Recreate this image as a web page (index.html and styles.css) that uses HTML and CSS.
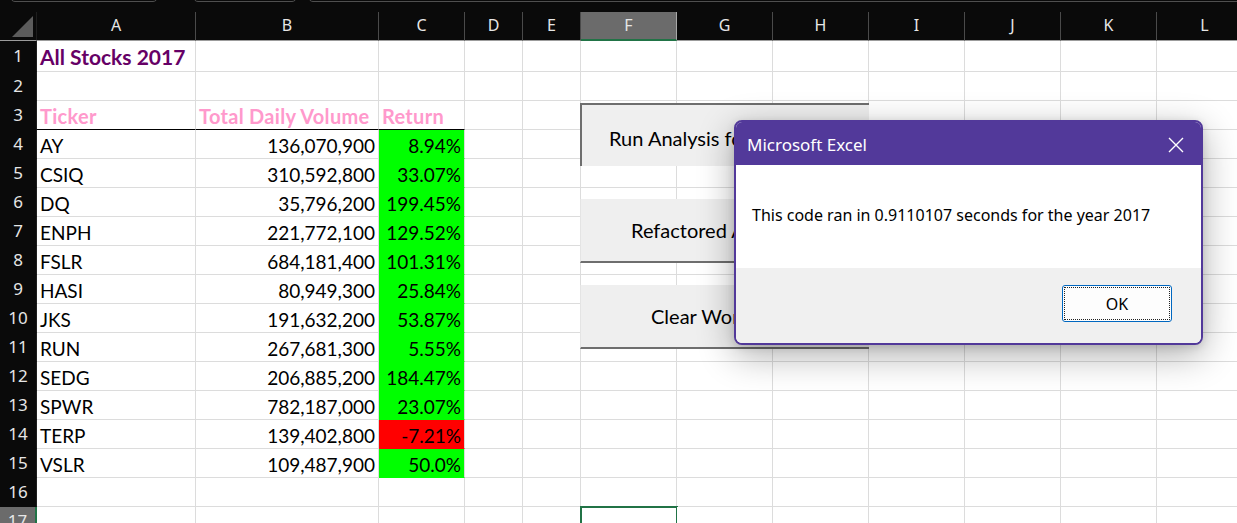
FILE: index.html
```html
<!DOCTYPE html>
<html lang="en">
<head>
<meta charset="utf-8">
<title>All Stocks 2017</title>
<link rel="stylesheet" href="styles.css">
</head>
<body>
<div class="topbar">
  <div class="pill p1"></div>
  <div class="pill p2"></div>
  <div class="pill p3"></div>
</div>
<div class="sheet">
  <div class="row hdr">
    <div class="corner"><span class="tri"></span></div>
    <div>A</div><div>B</div><div>C</div><div>D</div><div>E</div><div class="selcol">F</div><div>G</div><div>H</div><div>I</div><div>J</div><div>K</div><div>L</div>
  </div>
  <div class="row r1"><div class="rh">1</div><div class="title">All Stocks 2017</div><i></i><i></i><i></i><i></i><i></i><i></i><i></i><i></i><i></i><i></i><i></i></div>
  <div class="row"><div class="rh">2</div><i></i><i></i><i></i><i></i><i></i><i></i><i></i><i></i><i></i><i></i><i></i><i></i></div>
  <div class="row"><div class="rh">3</div><div class="th">Ticker</div><div class="th">Total Daily Volume</div><div class="th">Return</div><i></i><i></i><i></i><i></i><i></i><i></i><i></i><i></i><i></i></div>
  <div class="row"><div class="rh">4</div><div>AY</div><div class="num">136,070,900</div><div class="num up">8.94%</div><i></i><i></i><i></i><i></i><i></i><i></i><i></i><i></i><i></i></div>
  <div class="row"><div class="rh">5</div><div>CSIQ</div><div class="num">310,592,800</div><div class="num up">33.07%</div><i></i><i></i><i></i><i></i><i></i><i></i><i></i><i></i><i></i></div>
  <div class="row"><div class="rh">6</div><div>DQ</div><div class="num">35,796,200</div><div class="num up">199.45%</div><i></i><i></i><i></i><i></i><i></i><i></i><i></i><i></i><i></i></div>
  <div class="row"><div class="rh">7</div><div>ENPH</div><div class="num">221,772,100</div><div class="num up">129.52%</div><i></i><i></i><i></i><i></i><i></i><i></i><i></i><i></i><i></i></div>
  <div class="row"><div class="rh">8</div><div>FSLR</div><div class="num">684,181,400</div><div class="num up">101.31%</div><i></i><i></i><i></i><i></i><i></i><i></i><i></i><i></i><i></i></div>
  <div class="row"><div class="rh">9</div><div>HASI</div><div class="num">80,949,300</div><div class="num up">25.84%</div><i></i><i></i><i></i><i></i><i></i><i></i><i></i><i></i><i></i></div>
  <div class="row"><div class="rh">10</div><div>JKS</div><div class="num">191,632,200</div><div class="num up">53.87%</div><i></i><i></i><i></i><i></i><i></i><i></i><i></i><i></i><i></i></div>
  <div class="row"><div class="rh">11</div><div>RUN</div><div class="num">267,681,300</div><div class="num up">5.55%</div><i></i><i></i><i></i><i></i><i></i><i></i><i></i><i></i><i></i></div>
  <div class="row"><div class="rh">12</div><div>SEDG</div><div class="num">206,885,200</div><div class="num up">184.47%</div><i></i><i></i><i></i><i></i><i></i><i></i><i></i><i></i><i></i></div>
  <div class="row"><div class="rh">13</div><div>SPWR</div><div class="num">782,187,000</div><div class="num up">23.07%</div><i></i><i></i><i></i><i></i><i></i><i></i><i></i><i></i><i></i></div>
  <div class="row"><div class="rh">14</div><div>TERP</div><div class="num">139,402,800</div><div class="num down">-7.21%</div><i></i><i></i><i></i><i></i><i></i><i></i><i></i><i></i><i></i></div>
  <div class="row"><div class="rh">15</div><div>VSLR</div><div class="num">109,487,900</div><div class="num up">50.0%</div><i></i><i></i><i></i><i></i><i></i><i></i><i></i><i></i><i></i></div>
  <div class="row"><div class="rh">16</div><i></i><i></i><i></i><i></i><i></i><i></i><i></i><i></i><i></i><i></i><i></i><i></i></div>
  <div class="row"><div class="rh selrow">17</div><i></i><i></i><i></i><i></i><i></i><i class="selcell"></i><i></i><i></i><i></i><i></i><i></i><i></i></div>
</div>

<div class="btn btn-run"><span>Run Analysis for All Stocks</span></div>
<div class="btn btn-refactor"><span>Refactored Analysis</span></div>
<div class="btn btn-clear"><span>Clear Worksheet</span></div>

<div class="dialog">
  <div class="dlg-title">
    <span>Microsoft Excel</span>
    <svg class="close" width="16" height="16" viewBox="0 0 16 16"><path d="M1 1 L15 15 M15 1 L1 15" stroke="#fff" stroke-width="1.4" fill="none"/></svg>
  </div>
  <div class="dlg-body">This code ran in 0.9110107 seconds for the year 2017</div>
  <div class="dlg-foot"><div class="ok"><span>OK</span></div></div>
</div>
</body>
</html>
```

FILE: styles.css
```css
* { box-sizing: border-box; margin: 0; padding: 0; }
html, body { width: 1237px; height: 523px; overflow: hidden; background: #0a0a0a; }
body { position: relative; font-family: Lato, "Liberation Sans", sans-serif; }

.topbar { height: 12px; display: flex; gap: 35px; padding-left: 10px; overflow: hidden; }
.pill { height: 10px; margin-top: -8px; border: 1px solid #4f4f4f; border-radius: 5px; }
.p1 { width: 148px; }
.p2 { width: 104px; margin-right: -24px; }
.p3 { flex: 1; margin-right: -20px; }

.row { display: grid; grid-template-columns: 37px 159px 183px 86px 58px 58px repeat(7, 96px); height: 29px; }
.row.r1 { height: 31px; }
.row > * {
  background: #fff; border-right: 1px solid #dcdcdc; border-bottom: 1px solid #dcdcdc;
  display: flex; align-items: flex-end; padding: 0 3px 1px; font-size: 19px; line-height: 23px;
  white-space: nowrap; overflow: hidden; color: #000; font-style: normal;
}
.row > .rh {
  background: #0a0a0a; color: #e6e6e6; justify-content: center; align-items: center; padding: 0 0 1px;
  border-right: 1px solid #1e1e1e; border-bottom: 1px solid #0a0a0a; font-family: "Noto Sans", sans-serif; font-size: 17px;
}
.row > .rh.selrow { background: #6b6b6b; border-right: 2px solid #217346; }
.hdr > * {
  background: #0a0a0a; color: #e6e6e6; justify-content: center; align-items: center; padding: 0 0 1px;
  border-right: 1px solid #4a4a4a; border-bottom: 1px solid #9c9c9c; font-family: "Noto Sans", sans-serif; font-size: 16px;
}
.hdr > .corner { justify-content: flex-end; align-items: flex-end; padding: 0 3px 3px 0; border-right: 1px solid #1e1e1e; }
.tri { width: 21px; height: 21px; background: #5c5c5c; clip-path: polygon(100% 0, 100% 100%, 0 100%); }
.hdr > .selcol { background: #6b6b6b; border-right-color: #a8a8a8; border-bottom: 2px solid #217346; }

.row > .title { color: #660066; font-weight: 700; font-size: 21px; padding-bottom: 3px; }
.row > .th { color: #ff99cc; font-weight: 700; font-size: 20px; letter-spacing: 0.3px; border-bottom: 1px solid #000; }
.num { justify-content: flex-end; }
.row > .up { background: #00ff00; border-bottom-color: #00ff00; }
.row > .down { background: #ff0000; border-bottom-color: #ff0000; }
.row > .selcell { outline: 2px solid #217346; outline-offset: -1px; }

.btn {
  position: absolute; left: 580px; width: 289px; height: 64px; background: #efefef;
  display: flex; align-items: center; font-size: 20px; color: #000; white-space: nowrap; overflow: hidden;
  border-left: 1px solid #e4e4e4; border-bottom: 2px solid #6e6e6e;
}
.btn-run { top: 103px; height: 63px; border-top: 2px solid #6e6e6e; border-left: 2px solid #6e6e6e; border-bottom: none; padding-left: 27px; padding-top: 4px; }
.btn-refactor { top: 199px; padding-left: 50px; }
.btn-clear { top: 285px; padding-left: 70px; }

.dialog {
  position: absolute; left: 734px; top: 120px; width: 469px; height: 225px;
  border: 2px solid #52399a; border-radius: 8px; overflow: hidden; background: #fff;
  display: flex; flex-direction: column;
  box-shadow: 0 10px 36px rgba(0, 0, 0, 0.32), 0 2px 8px rgba(0, 0, 0, 0.12);
  font-family: "Noto Sans", "Open Sans", sans-serif;
}
.dlg-title { height: 43px; background: #52399a; color: #fff; display: flex; align-items: center; justify-content: space-between; padding: 2px 17px 0 11px; font-size: 17px; }
.close { width: 16px; height: 16px; }
.dlg-body { height: 103px; display: flex; align-items: center; padding: 0 16px 4px; font-size: 16px; color: #000; background: #fff; }
.dlg-foot { flex: 1; background: #f0f0f0; display: flex; justify-content: flex-end; align-items: flex-start; padding: 17px 29px 0 0; }
.ok { width: 110px; height: 37px; border: 1px solid #0067c0; border-radius: 3px; background: #fdfdfd; padding: 1px; }
.ok span { display: flex; width: 100%; height: 100%; align-items: center; justify-content: center; border: 1px dotted #222; font-size: 16px; color: #000; }
```
